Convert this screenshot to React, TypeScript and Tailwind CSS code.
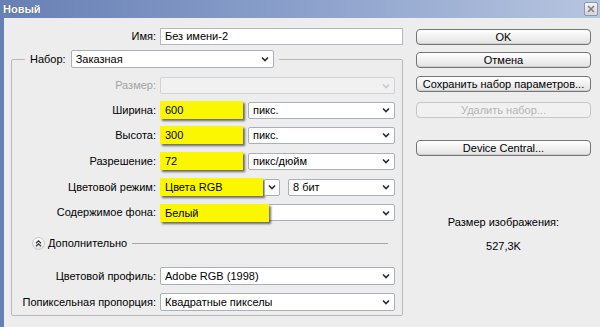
import React from 'react'

const font = "font-['Liberation_Sans',Arial,sans-serif]"

const Chevron = ({ faded }: { faded?: boolean }) => (
  <svg width="8" height="6" viewBox="0 0 8 6" className="shrink-0">
    <polyline points="1,1.5 4,4.5 7,1.5" fill="none" stroke={faded ? '#c4c8cc' : '#2b2b2b'} strokeWidth="1.6" />
  </svg>
)

type SelectProps = {
  value?: string
  className?: string
  disabled?: boolean
  highlight?: string
}

const Select = ({ value, className = '', disabled, highlight }: SelectProps) => (
  <div
    className={`relative flex h-[17px] items-center justify-between rounded-[2px] border pl-[4px] pr-[4px] ${
      disabled ? 'border-[#d0d3d6] bg-[#f1f1f1]' : 'border-[#a9b0b8] bg-white'
    } ${className}`}
  >
    <span className="truncate leading-none">{value}</span>
    <Chevron faded={disabled} />
    {highlight && (
      <div className={`absolute -top-[1px] -left-[1px] flex h-[18px] items-center bg-[#fbf700] pl-[5px] shadow-[2px_2px_2px_rgba(0,0,0,0.55)] ${highlight}`}>
        {value}
      </div>
    )}
  </div>
)

const YellowField = ({ value, className = '' }: { value: string; className?: string }) => (
  <div className={`flex h-[18px] items-center bg-[#fbf700] pl-[5px] shadow-[2px_2px_2px_rgba(0,0,0,0.55)] ${className}`}>
    {value}
  </div>
)

const Row = ({ label, children, className = '', muted }: { label: string; children: React.ReactNode; className?: string; muted?: boolean }) => (
  <div className={`flex items-center ${className}`}>
    <div className={`w-[144px] shrink-0 pr-[0px] text-right ${muted ? 'text-[#a3a3a3]' : ''}`}>{label}</div>
    <div className="ml-[4px] flex items-center">{children}</div>
  </div>
)

const Button = ({ label, disabled, className = '' }: { label: string; disabled?: boolean; className?: string }) => (
  <div
    className={`flex h-[16px] w-[175px] items-center justify-center rounded-[4px] border ${
      disabled
        ? 'border-[#c3c5c8] bg-[#f1f1f1] text-[#b4b4b4]'
        : 'border-[#747474] bg-gradient-to-b from-white to-[#e2e2e2] shadow-[inset_0_-1px_0_#d0d0d0]'
    } ${className}`}
  >
    {label}
  </div>
)

export default function App() {
  return (
    <div className={`flex h-[327px] w-[600px] flex-col overflow-hidden bg-[#ededed] text-[11px] text-black ${font}`}>
      {/* title bar */}
      <div className="flex h-[18px] shrink-0 items-center justify-between bg-gradient-to-r from-[#6780b4] via-[#8ba0cb] to-[#b7c5df] pl-[3px] pr-[2px]">
        <span className="font-bold text-white [text-shadow:0_0_1px_#34497a]">Новый</span>
        <div className="flex h-[14px] w-[14px] items-center justify-center rounded-[2px] border border-[#8f97a6] bg-gradient-to-b from-[#f4f4f4] to-[#d4d6da]">
          <svg width="8" height="8" viewBox="0 0 8 8">
            <path d="M1 1 L7 7 M7 1 L1 7" stroke="#7d7d7d" strokeWidth="1.6" />
          </svg>
        </div>
      </div>

      <div className="flex flex-1 border-l-[4px] border-[#6780b4] bg-[#ededed]">
        {/* left column */}
        <div className="ml-[7px] flex w-[392px] flex-col">
          <div className="mt-[10px] flex h-[17px] items-center">
            <div className="w-[145px] text-right">Имя:</div>
            <div className="ml-[4px] flex h-[17px] w-[243px] items-center border border-[#b3b9c0] bg-white pl-[4px]">
              Без имени-2
            </div>
          </div>

          <fieldset className="mt-[5px] h-[266px] rounded-[2px] border border-[#b9b9b9]">
            <legend className="ml-[13px] flex items-center px-[5px]">
              <span>Набор:</span>
              <Select value="Заказная" className="ml-[5px] h-[18px] w-[203px]" />
            </legend>

            <Row label="Размер:" muted className="mt-[9px]">
              <Select disabled className="h-[16px] w-[235px]" />
            </Row>
            <Row label="Ширина:" className="mt-[7px]">
              <YellowField value="600" className="w-[83px]" />
              <Select value="пикс." className="ml-[5px] w-[147px]" />
            </Row>
            <Row label="Высота:" className="mt-[7px]">
              <YellowField value="300" className="w-[83px]" />
              <Select value="пикс." className="ml-[5px] w-[147px]" />
            </Row>
            <Row label="Разрешение:" className="mt-[8px]">
              <YellowField value="72" className="w-[83px]" />
              <Select value="пикс/дюйм" className="ml-[5px] w-[147px]" />
            </Row>
            <Row label="Цветовой режим:" className="mt-[8px]">
              <YellowField value="Цвета RGB" className="w-[103px]" />
              <div className="ml-[1px] flex h-[17px] w-[16px] items-center justify-center rounded-[2px] border border-[#a9b0b8] bg-white">
                <Chevron />
              </div>
              <Select value="8 бит" className="ml-[8px] w-[107px]" />
            </Row>
            <Row label="Содержимое фона:" className="mt-[8px]">
              <Select value="Белый" className="w-[235px]" highlight="w-[109px]" />
            </Row>

            <div className="mt-[15px] flex h-[14px] items-center pl-[20px] pr-[14px]">
              <div className="flex h-[13px] w-[13px] items-center justify-center rounded-full border border-[#c6c6c6] bg-gradient-to-b from-white to-[#e4e4e4]">
                <svg width="7" height="7" viewBox="0 0 7 7">
                  <polyline points="1,3.2 3.5,0.8 6,3.2" fill="none" stroke="#333" strokeWidth="1.2" />
                  <polyline points="1,6.2 3.5,3.8 6,6.2" fill="none" stroke="#333" strokeWidth="1.2" />
                </svg>
              </div>
              <span className="ml-[3px]">Дополнительно</span>
              <div className="ml-[5px] h-0 flex-1 border-t border-[#a8a8a8]" />
            </div>

            <Row label="Цветовой профиль:" className="mt-[17px]">
              <Select value="Adobe RGB (1998)" className="h-[18px] w-[235px]" />
            </Row>
            <Row label="Попиксельная пропорция:" className="mt-[8px]">
              <Select value="Квадратные пикселы" className="h-[18px] w-[235px]" />
            </Row>
          </fieldset>
        </div>

        {/* right column */}
        <div className="ml-[13px] flex w-[175px] flex-col">
          <Button label="OK" className="mt-[11px]" />
          <Button label="Отмена" className="mt-[7px]" />
          <Button label="Сохранить набор параметров..." className="mt-[8px]" />
          <Button label="Удалить набор..." disabled className="mt-[10px]" />
          <Button label="Device Central..." className="mt-[22px]" />
          <div className="mt-[58px] text-center">Размер изображения:</div>
          <div className="mt-[7px] text-center">527,3K</div>
        </div>
      </div>
    </div>
  )
}
